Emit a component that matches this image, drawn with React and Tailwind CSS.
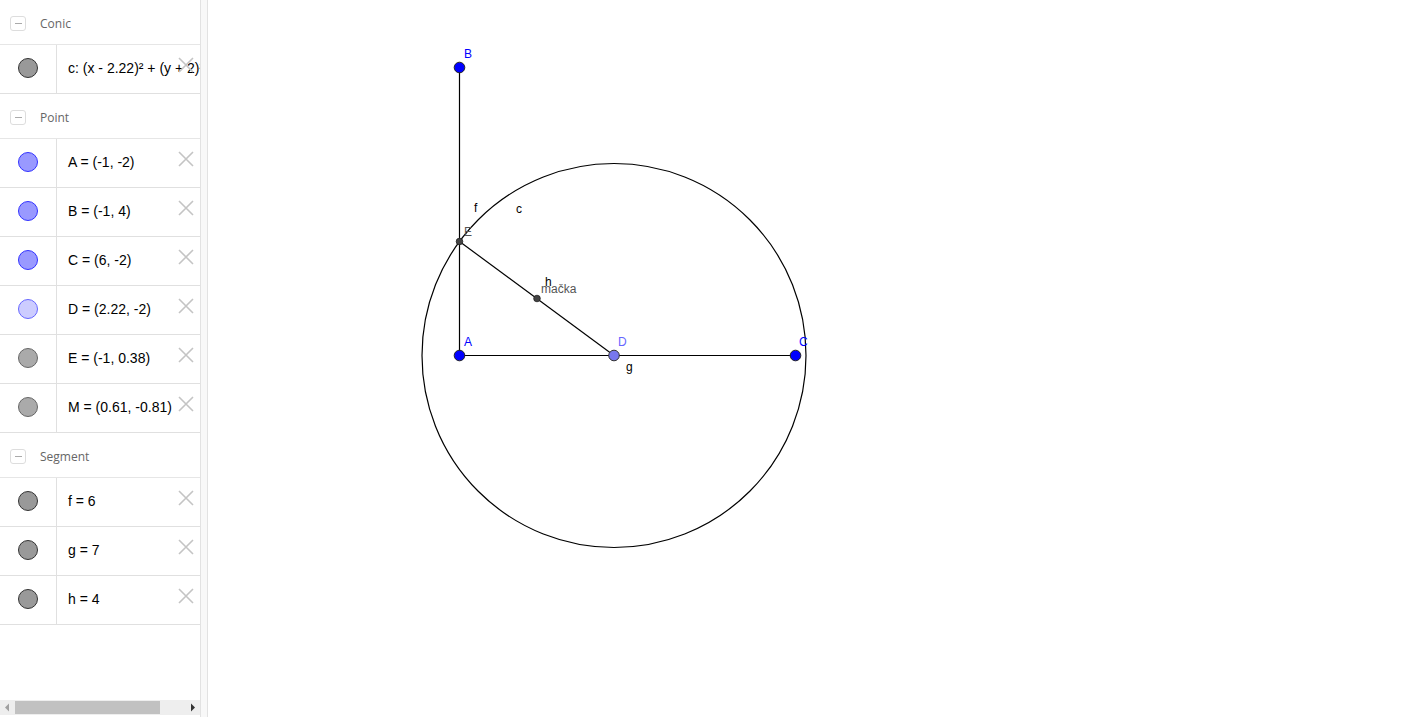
import React from 'react';

const groups = [
  {
    title: 'Conic',
    items: [{ text: 'c: (x - 2.22)² + (y + 2)² = 16', fill: '#999999', stroke: '#333333' }],
  },
  {
    title: 'Point',
    items: [
      { text: 'A = (-1, -2)', fill: '#9999ff', stroke: '#3333ff' },
      { text: 'B = (-1, 4)', fill: '#9999ff', stroke: '#3333ff' },
      { text: 'C = (6, -2)', fill: '#9999ff', stroke: '#3333ff' },
      { text: 'D = (2.22, -2)', fill: '#ccccff', stroke: '#6666ff' },
      { text: 'E = (-1, 0.38)', fill: '#aaaaaa', stroke: '#666666' },
      { text: 'M = (0.61, -0.81)', fill: '#aaaaaa', stroke: '#666666' },
    ],
  },
  {
    title: 'Segment',
    items: [
      { text: 'f = 6', fill: '#999999', stroke: '#333333' },
      { text: 'g = 7', fill: '#999999', stroke: '#333333' },
      { text: 'h = 4', fill: '#999999', stroke: '#333333' },
    ],
  },
];

function GroupHeader({ title }) {
  return (
    <div className="flex h-[45px] items-center border-b border-[#e6e6e6] pl-[10px] pt-[3px]">
      <span className="flex h-[15px] w-[16px] items-center justify-center rounded-[3px] border border-[#dddddd]">
        <span className="h-px w-[7px] bg-[#aaaaaa]" />
      </span>
      <span className="ml-[14px] text-[12px] text-[#666666] [font-family:'Open_Sans',sans-serif]">{title}</span>
    </div>
  );
}

function ItemRow({ item }) {
  return (
    <div className="relative flex h-[49px] overflow-hidden border-b border-[#e0e0e0]">
      <div className="flex w-[57px] shrink-0 items-center justify-center border-r border-[#e0e0e0] pb-[2px] pr-px">
        <span
          className="block h-[20px] w-[20px] rounded-full border"
          style={{ backgroundColor: item.fill, borderColor: item.stroke }}
        />
      </div>
      <div className="flex items-center whitespace-nowrap pb-[1px] pl-[11px] text-[14px] text-black [font-family:'Liberation_Sans',Arial,sans-serif]">
        {item.text}
      </div>
      <svg className="absolute right-[6px] top-[12px]" width="16" height="16" viewBox="0 0 16 16">
        <path d="M1 1 L15 15 M15 1 L1 15" stroke="#c4c4c4" strokeWidth="1.6" fill="none" />
      </svg>
    </div>
  );
}

function Sidebar() {
  return (
    <div className="flex w-[200px] shrink-0 flex-col bg-white">
      <div className="flex-1 overflow-hidden">
        {groups.map((g) => (
          <div key={g.title}>
            <GroupHeader title={g.title} />
            {g.items.map((it) => (
              <ItemRow key={it.text} item={it} />
            ))}
          </div>
        ))}
      </div>
      <div className="flex h-[15px] items-center bg-[#eeeeee]">
        <svg width="15" height="15" viewBox="0 0 15 15">
          <path d="M9 3.5 L5 7.5 L9 11.5 Z" fill="#a0a0a0" />
        </svg>
        <div className="h-[13px] w-[145px] bg-[#c1c1c1]" />
        <div className="flex-1" />
        <svg width="15" height="15" viewBox="0 0 15 15">
          <path d="M6 3.5 L10 7.5 L6 11.5 Z" fill="#333333" />
        </svg>
      </div>
      <div className="h-[2px]" />
    </div>
  );
}

function Canvas() {
  const font = { fontFamily: "'Liberation Sans', Arial, sans-serif", fontSize: 12 };
  const A = [459.5, 355.5];
  const B = [459.5, 67.5];
  const C = [795.5, 355.5];
  const D = [614, 355.5];
  const E = [459.5, 241.5];
  const M = [537, 298.5];
  return (
    <div className="relative flex-1 overflow-hidden bg-white">
      <svg width="1218" height="717" viewBox="208 0 1218 717" className="block">
        <circle cx={D[0]} cy={D[1]} r="192" fill="none" stroke="#000" strokeWidth="1.2" />
        <line x1={A[0]} y1={A[1]} x2={B[0]} y2={B[1]} stroke="#000" strokeWidth="1.2" />
        <line x1={A[0]} y1={A[1]} x2={C[0]} y2={C[1]} stroke="#000" strokeWidth="1.2" />
        <line x1={E[0]} y1={E[1]} x2={D[0]} y2={D[1]} stroke="#000" strokeWidth="1.2" />
        <circle cx={E[0]} cy={E[1]} r="3.3" fill="#444" stroke="#222" strokeWidth="0.8" />
        <circle cx={M[0]} cy={M[1]} r="3.3" fill="#444" stroke="#222" strokeWidth="0.8" />
        <circle cx={A[0]} cy={A[1]} r="5.3" fill="#0000ff" stroke="#222" strokeWidth="1" />
        <circle cx={B[0]} cy={B[1]} r="5.3" fill="#0000ff" stroke="#222" strokeWidth="1" />
        <circle cx={C[0]} cy={C[1]} r="5.3" fill="#0000ff" stroke="#222" strokeWidth="1" />
        <circle cx={D[0]} cy={D[1]} r="5.3" fill="#7878ee" stroke="#333" strokeWidth="1" />
        <g style={font}>
          <text x="464" y="58" fill="#0000ff">B</text>
          <text x="464" y="346" fill="#0000ff">A</text>
          <text x="799" y="346" fill="#0000ff">C</text>
          <text x="618" y="346" fill="#6666ff">D</text>
          <text x="464" y="236" fill="#555555">E</text>
          <text x="474" y="212" fill="#000">f</text>
          <text x="516" y="213" fill="#000">c</text>
          <text x="545" y="286" fill="#000">h</text>
          <text x="541" y="293" fill="#555555">mačka</text>
          <text x="626" y="371" fill="#000">g</text>
        </g>
      </svg>
    </div>
  );
}

export default function App() {
  return (
    <div className="flex h-[717px] w-[1426px] overflow-hidden bg-white">
      <Sidebar />
      <div className="w-[8px] shrink-0 border-x border-[#e2e2e2] bg-[#f8f8f8]" />
      <Canvas />
    </div>
  );
}
